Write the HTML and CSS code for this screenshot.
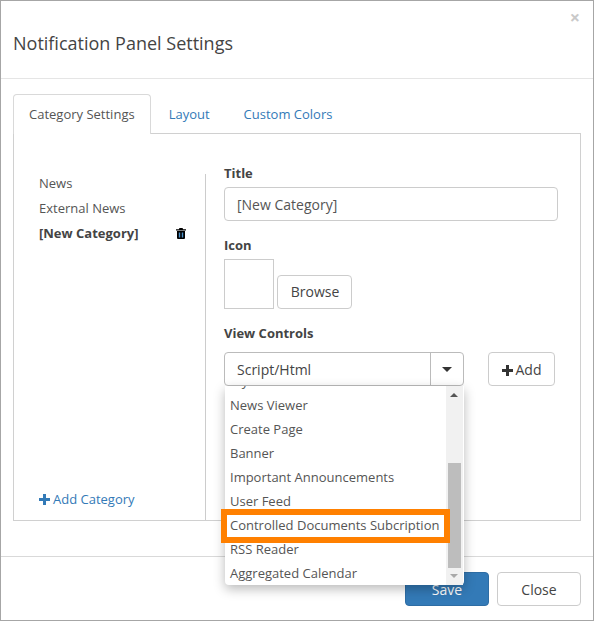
FILE: index.html
```html
<!DOCTYPE html>
<html lang="en">
<head>
<meta charset="utf-8">
<title>Notification Panel Settings</title>
<link rel="stylesheet" href="styles.css">
</head>
<body>
<div class="modal">
  <header class="modal-header">
    <h1 class="modal-title">Notification Panel Settings</h1>
    <span class="close-x">×</span>
  </header>
  <main class="modal-body">
    <nav class="tabs">
      <a class="tab tab-active">Category Settings</a>
      <a class="tab">Layout</a>
      <a class="tab">Custom Colors</a>
    </nav>
    <section class="panel">
      <aside class="sidebar">
        <ul class="cat-list">
          <li class="cat">News</li>
          <li class="cat">External News</li>
          <li class="cat cat-active">[New Category]
            <svg class="trash" width="10" height="11" viewBox="0 0 10 11"><path d="M3.500 0h3l.7 1.200H10v1.300H0V1.200h2.800zM1 3h8v7a1 1 0 0 1-1 1H2a1 1 0 0 1-1-1z" fill="#000"/><path d="M2.800 4.500h1.400v5H2.800zM5.800 4.500h1.400v5H5.800z" fill="#4a90c8"/></svg>
          </li>
        </ul>
        <a class="add-cat"><svg class="plus" width="11" height="11" viewBox="0 0 11 11"><path d="M4 0h3v4h4v3H7v4H4V7H0V4h4z" fill="currentColor"/></svg>Add Category</a>
      </aside>
      <div class="form">
        <label class="label label-title">Title</label>
        <div class="input">[New Category]</div>
        <label class="label label-icon">Icon</label>
        <div class="icon-row">
          <div class="icon-box"></div>
          <button class="btn btn-browse">Browse</button>
        </div>
        <label class="label label-view">View Controls</label>
        <div class="view-row">
          <div class="combo">
            <div class="combo-field">
              <span class="combo-value">Script/Html</span>
              <span class="combo-toggle"><i class="caret"></i></span>
            </div>
            <div class="dropdown">
              <ul class="options">
                <li class="option">My Sites</li>
                <li class="option">News Viewer</li>
                <li class="option">Create Page</li>
                <li class="option">Banner</li>
                <li class="option">Important Announcements</li>
                <li class="option">User Feed</li>
                <li class="option">Controlled Documents Subcription</li>
                <li class="option">RSS Reader</li>
                <li class="option">Aggregated Calendar</li>
              </ul>
              <div class="scrollbar">
                <i class="arrow-up"></i>
                <div class="thumb"></div>
                <i class="arrow-down"></i>
              </div>
              <div class="highlight"></div>
            </div>
          </div>
          <button class="btn btn-add"><svg class="plus plus-dark" width="11" height="11" viewBox="0 0 11 11"><path d="M4 0h3v4h4v3H7v4H4V7H0V4h4z" fill="currentColor"/></svg>Add</button>
        </div>
      </div>
    </section>
  </main>
  <footer class="modal-footer">
    <button class="btn btn-save">Save</button>
    <button class="btn btn-close">Close</button>
  </footer>
</div>
</body>
</html>
```
FILE: styles.css
```css
* { box-sizing: border-box; }
html, body { margin: 0; padding: 0; }
body {
  width: 594px;
  height: 621px;
  overflow: hidden;
  background: #fff;
  font-family: "Open Sans", sans-serif;
  font-size: 13px;
  color: #555;
}
ul { list-style: none; margin: 0; padding: 0; }

.modal {
  width: 594px;
  height: 621px;
  border: 1px solid #a6a6a6;
  display: flex;
  flex-direction: column;
}
.modal-header {
  height: 78px;
  flex: none;
  border-bottom: 1px solid #e5e5e5;
  padding: 29px 12px 0;
  position: relative;
}
.modal-title {
  margin: 0;
  font-size: 18px;
  font-weight: 400;
  line-height: 27px;
  color: #444;
}
.close-x {
  position: absolute;
  top: 6px;
  right: 13px;
  font-size: 18px;
  line-height: 20px;
  font-weight: 700;
  color: #c9c9c9;
}

.modal-body {
  height: 478px;
  flex: none;
  padding: 15px 12px 0;
  border-bottom: 1px solid #d9d9d9;
}
.tabs {
  display: flex;
  height: 39px;
  gap: 2px;
}
.tab {
  padding: 0 16px;
  line-height: 40px;
  color: #337ab7;
}
.tab-active {
  padding: 0 15px;
  height: 40px;
  line-height: 39px;
  color: #555;
  background: #fff;
  border: 1px solid #d9d9d9;
  border-bottom: 0;
  border-radius: 4px 4px 0 0;
  position: relative;
  z-index: 1;
}
.panel {
  height: 388px;
  width: 568px;
  border: 1px solid #d0d0d0;
  display: flex;
}

.sidebar {
  width: 192px;
  height: 346px;
  margin-top: 40px;
  border-right: 1px solid #ccc;
  padding-left: 25px;
  position: relative;
  flex: none;
}
.cat-list { display: flex; flex-direction: column; }
.cat {
  height: 25px;
  line-height: 19px;
  position: relative;
}
.cat-active { font-weight: 700; color: #444; }
.trash { position: absolute; left: 137px; top: 4px; }
.add-cat {
  position: absolute;
  left: 25px;
  top: 316px;
  color: #337ab7;
  line-height: 18px;
  white-space: nowrap;
}
.plus { margin-right: 3px; vertical-align: -1px; }
.plus-dark { color: #333; }

.form {
  padding: 30px 0 0 18px;
  flex: 1;
  min-width: 0;
}
.label {
  display: block;
  font-weight: 700;
  color: #444;
  line-height: 18px;
}
.input {
  width: 334px;
  height: 34px;
  margin-top: 5px;
  border: 1px solid #ccc;
  border-radius: 4px;
  padding: 0 12px;
  line-height: 33px;
  font-size: 14px;
  color: #555;
}
.label-icon { margin-top: 15px; }
.icon-row {
  display: flex;
  align-items: flex-end;
  gap: 3px;
  margin-top: 5px;
}
.icon-box {
  width: 50px;
  height: 50px;
  border: 1px solid #ccc;
}
.btn {
  font-family: inherit;
  font-size: 14px;
  height: 34px;
  border: 1px solid #ccc;
  border-radius: 4px;
  background: #fff;
  color: #444;
  padding: 0;
  margin: 0;
}
.btn-browse { width: 75px; padding: 0 0 2px 1px; }
.label-view { margin-top: 15px; }

.view-row {
  display: flex;
  gap: 24px;
  margin-top: 10px;
}
.combo { width: 240px; position: relative; }
.combo-field {
  height: 34px;
  display: flex;
  border: 1px solid #bbb;
  border-radius: 4px;
}
.combo-value {
  flex: 1;
  padding-left: 12px;
  line-height: 34px;
  font-size: 14px;
  color: #444;
}
.combo-toggle {
  width: 33px;
  border-left: 1px solid #bbb;
  display: flex;
  align-items: center;
  justify-content: center;
}
.caret {
  width: 0;
  height: 0;
  border-left: 5px solid transparent;
  border-right: 5px solid transparent;
  border-top: 5px solid #333;
}
.btn-add { width: 67px; }

.dropdown {
  position: absolute;
  left: 1px;
  top: 34px;
  width: 239px;
  height: 199px;
  background: #fff;
  border-radius: 0 0 4px 4px;
  box-shadow: 0 4px 12px rgba(0, 0, 0, .28);
  z-index: 5;
}
.options {
  height: 199px;
  overflow: hidden;
  padding: 0 5px;
  display: flex;
  flex-direction: column;
  justify-content: flex-end;
}
.option {
  flex: none;
  height: 24px;
  line-height: 24px;
  font-size: 13px;
  color: #555;
  white-space: nowrap;
}
.scrollbar {
  position: absolute;
  right: 1px;
  top: 0;
  width: 17px;
  height: 199px;
  background: #f1f1f1;
}
.thumb {
  position: absolute;
  left: 2px;
  top: 77px;
  width: 13px;
  height: 105px;
  background: #bdbdbd;
}
.arrow-up, .arrow-down {
  position: absolute;
  left: 4px;
  width: 0;
  height: 0;
  border-left: 4px solid transparent;
  border-right: 4px solid transparent;
}
.arrow-up { top: 7px; border-bottom: 4px solid #555; }
.arrow-down { bottom: 7px; border-top: 4px solid #a8a8a8; }
.highlight {
  position: absolute;
  left: -4px;
  top: 123px;
  width: 229px;
  height: 34px;
  border: 6px solid #ff8000;
}

.modal-footer {
  flex: 1;
  display: flex;
  justify-content: flex-end;
  gap: 8px;
  padding: 15px 12px 0;
}
.btn-save, .btn-close { width: 84px; }
.btn-save {
  background: #337ab7;
  border-color: #2e6da4;
  color: #fff;
}
```
